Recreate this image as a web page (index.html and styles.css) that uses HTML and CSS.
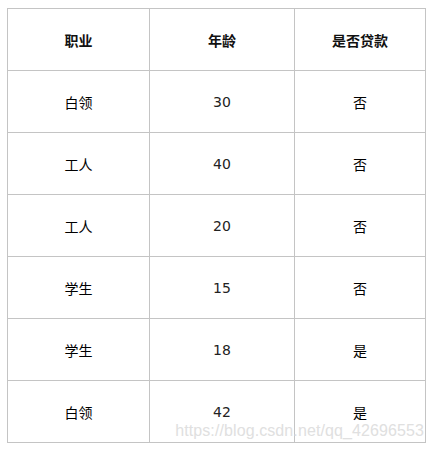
FILE: index.html
```html
<!DOCTYPE html>
<html>
<head>
<meta charset="utf-8">
<link rel="stylesheet" href="styles.css">
</head>
<body>
<div class="wrap">
<table class="grid">
<colgroup><col class="c1"><col class="c2"><col class="c3"></colgroup>
<thead>
<tr><th>职业</th><th>年龄</th><th>是否贷款</th></tr>
</thead>
<tbody>
<tr><td>白领</td><td class="num">30</td><td>否</td></tr>
<tr><td>工人</td><td class="num">40</td><td>否</td></tr>
<tr><td>工人</td><td class="num">20</td><td>否</td></tr>
<tr><td>学生</td><td class="num">15</td><td>否</td></tr>
<tr><td>学生</td><td class="num">18</td><td>是</td></tr>
<tr><td>白领</td><td class="num">42</td><td>是</td></tr>
</tbody>
</table>
<div class="watermark">https://blog.csdn.net/qq_42696553</div>
</div>
</body>
</html>
```
FILE: styles.css
```css
html, body {
  margin: 0;
  padding: 0;
  background: #fff;
}
.wrap {
  position: relative;
  padding: 8px 0 0 7px;
  width: 425px;
}
.grid {
  border-collapse: collapse;
  table-layout: fixed;
  width: 418px;
  font-family: "Noto Sans CJK SC", "DejaVu Sans", sans-serif;
  font-size: 14px;
  color: #000;
}
.c1 { width: 142px; }
.c2 { width: 145px; }
.c3 { width: 131px; }
.grid tr {
  height: 62px;
}
.grid th, .grid td {
  border: 1px solid #c4c4c4;
  padding: 0;
  text-align: center;
  vertical-align: middle;
}
.grid th {
  font-weight: bold;
  font-size: 14px;
  color: #111;
}
.grid td.num {
  font-family: "DejaVu Sans", sans-serif;
  font-size: 14px;
  color: #222;
}
.watermark {
  position: absolute;
  right: 8px;
  top: 422px;
  font-family: "Liberation Sans", Arial, sans-serif;
  font-size: 16px;
  color: #e0e0e0;
  letter-spacing: 0.1px;
}
```
